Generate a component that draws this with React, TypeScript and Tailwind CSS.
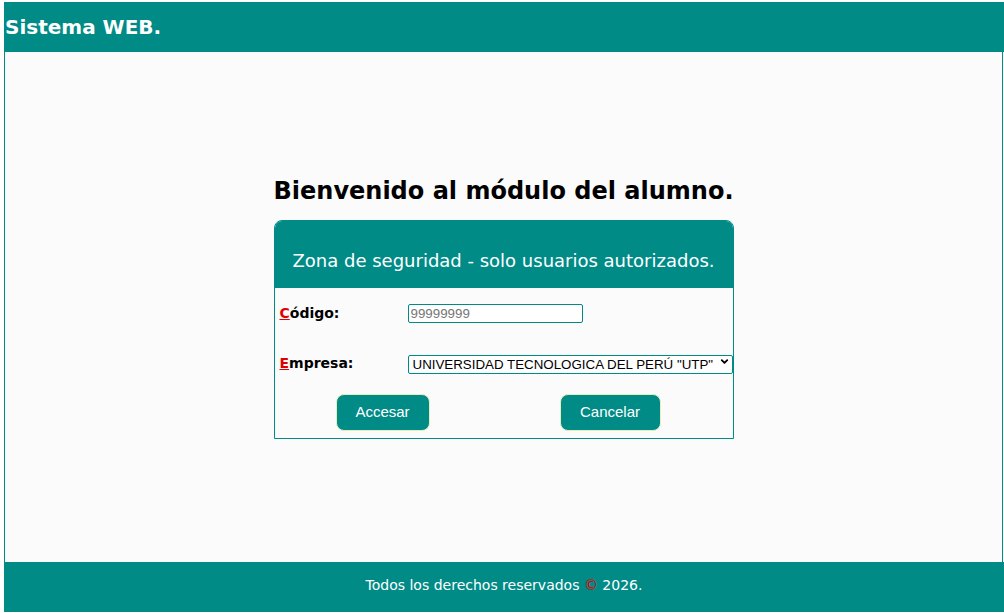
import React, { useState } from 'react';
import { ChevronDown } from 'lucide-react';

const EMPRESAS = ['UNIVERSIDAD TECNOLOGICA DEL PERÚ "UTP"'];

const App: React.FC = () => {
  const [codigo, setCodigo] = useState('');
  const [empresa, setEmpresa] = useState(EMPRESAS[0]);

  return (
    <div className="min-h-screen bg-white pt-[2px] pl-[4px] font-['DejaVu_Sans',Verdana,sans-serif]">
      <div className="flex h-[610px] flex-col border-l border-[#008b87] bg-[#fbfbfb]">
        {/* barra superior */}
        <header className="flex h-[50px] items-center bg-[#008b87] -ml-px pl-[1px]">
          <h1 className="text-[20px] font-bold text-white">Sistema WEB.</h1>
        </header>

        <main className="mr-px flex flex-1 flex-col items-center justify-center border-r border-[#008b87]">
          <h2 className="mb-[14px] text-[24px] font-bold leading-[30px] text-black">
            Bienvenido al módulo del alumno.
          </h2>

          <div className="w-[460px] overflow-hidden rounded-t-[8px] border border-[#008b87] bg-[#fbfbfb]">
            <div className="bg-[#008b87] pt-[29px] pb-[16px] text-center text-[18px] leading-[22px] text-white">
              Zona de seguridad - solo usuarios autorizados.
            </div>

            <div className="pt-[16px] pb-[7px]">
              <div className="flex h-[20px] items-center pl-[5px]">
                <label className="w-[128px] text-[14px] font-bold text-black">
                  <span className="text-[#e00000] underline">C</span>ódigo:
                </label>
                <input
                  value={codigo}
                  onChange={(e) => setCodigo(e.target.value)}
                  placeholder="99999999"
                  className="h-[19px] w-[175px] rounded-[2px] border border-[#008b87] bg-white px-[2px] font-['Liberation_Sans',Arial,sans-serif] text-[13.33px] text-black outline-none placeholder:text-[#757575]"
                />
              </div>

              <div className="mt-[30px] flex h-[20px] items-center pl-[5px]">
                <label className="w-[128px] text-[14px] font-bold text-black">
                  <span className="text-[#e00000] underline">E</span>mpresa:
                </label>
                <div className="relative">
                  <select
                    value={empresa}
                    onChange={(e) => setEmpresa(e.target.value)}
                    className="h-[19px] w-[325px] appearance-none rounded-[2px] border border-[#008b87] bg-white pl-[4px] pr-[18px] font-['Liberation_Sans',Arial,sans-serif] text-[13.33px] leading-[17px] text-black outline-none"
                  >
                    {EMPRESAS.map((emp) => (
                      <option key={emp} value={emp}>
                        {emp}
                      </option>
                    ))}
                  </select>
                  <ChevronDown
                    className="pointer-events-none absolute right-[3px] top-[4px] h-[11px] w-[11px] text-black"
                    strokeWidth={4}
                  />
                </div>
              </div>

              <div className="mt-[20px] flex pl-[61px]">
                <button className="h-[37px] w-[94px] rounded-[8px] border border-[#e6eec0] bg-[#008b87] font-['Liberation_Sans',Arial,sans-serif] text-[15px] text-white">
                  Accesar
                </button>
                <button className="ml-[130px] h-[37px] w-[101px] rounded-[8px] border border-[#e6eec0] bg-[#008b87] font-['Liberation_Sans',Arial,sans-serif] text-[15px] text-white">
                  Cancelar
                </button>
              </div>
            </div>
          </div>
        </main>

        <footer className="-ml-px flex h-[50px] items-center justify-center bg-[#008b87] pb-[4px]">
          <p className="text-[14px] text-white">
            Todos los derechos reservados <span className="text-[#e00000]">©</span> 2026.
          </p>
        </footer>
      </div>
    </div>
  );
};

export default App;
